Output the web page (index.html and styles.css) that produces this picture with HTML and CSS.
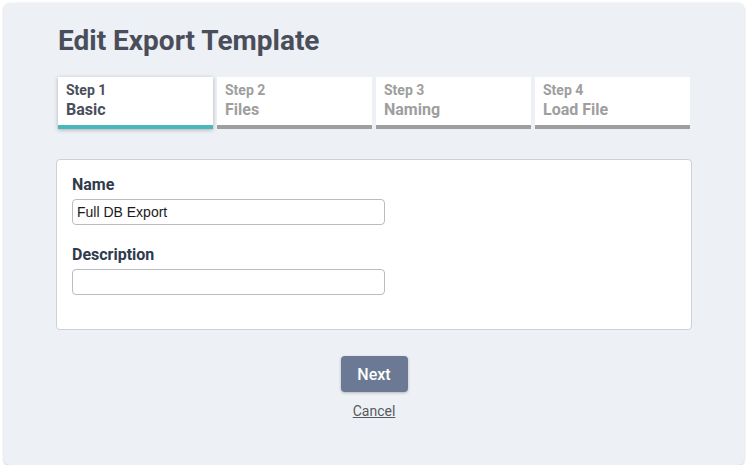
FILE: index.html
```html
<!DOCTYPE html>
<html lang="en">
<head>
<meta charset="utf-8">
<title>Edit Export Template</title>
<link rel="stylesheet" href="styles.css">
</head>
<body>
<div class="panel">
  <h1 class="title">Edit Export Template</h1>
  <div class="steps">
    <div class="step active">
      <div class="step-num">Step 1</div>
      <div class="step-name">Basic</div>
    </div>
    <div class="step">
      <div class="step-num">Step 2</div>
      <div class="step-name">Files</div>
    </div>
    <div class="step">
      <div class="step-num">Step 3</div>
      <div class="step-name">Naming</div>
    </div>
    <div class="step">
      <div class="step-num">Step 4</div>
      <div class="step-name">Load File</div>
    </div>
  </div>
  <div class="card">
    <div class="field">
      <label class="label" for="name">Name</label>
      <input class="input" id="name" type="text" value="Full DB Export">
    </div>
    <div class="field">
      <label class="label" for="desc">Description</label>
      <input class="input" id="desc" type="text" value="">
    </div>
  </div>
  <div class="actions">
    <button class="btn-next" type="button">Next</button>
    <a class="cancel" href="#">Cancel</a>
  </div>
</div>
</body>
</html>
```

FILE: styles.css
```css
* { box-sizing: border-box; }

html, body {
  margin: 0;
  padding: 0;
  background: #ffffff;
  font-family: Roboto, "Liberation Sans", Arial, sans-serif;
}

.panel {
  margin: 3px 5px 0 4px;
  height: 462px;
  background: #edf1f5;
  border-radius: 6px;
  box-shadow: 0 1px 3px rgba(0, 0, 0, 0.22);
  padding: 21px 52px 0 52px;
}

.title {
  margin: 0 0 19px 2px;
  font-size: 28px;
  line-height: 34px;
  font-weight: 700;
  color: #4a4e5a;
}

.steps {
  display: flex;
  gap: 4px;
  margin: 0 2px 30px 2px;
}

.step {
  flex: 1;
  background: #ffffff;
  padding: 4px 8px 5px 8px;
  border-bottom: 4px solid #9e9e9e;
  color: #9e9e9e;
  font-weight: 700;
}

.step.active {
  border-bottom-color: #4bb7bd;
  color: #4a4e5a;
  box-shadow: 0 1px 4px rgba(0, 0, 0, 0.28);
}

.step-num {
  font-size: 14px;
  line-height: 19px;
}

.step-name {
  font-size: 16px;
  line-height: 20px;
}

.card {
  background: #ffffff;
  border: 1px solid #cdd0d4;
  border-radius: 4px;
  padding: 16px 15px 13px 15px;
}

.field {
  display: flex;
  flex-direction: column;
  align-items: flex-start;
  margin-bottom: 21px;
}

.label {
  font-size: 16px;
  line-height: 18px;
  font-weight: 700;
  color: #2f3a4c;
  margin-bottom: 5px;
}

.input {
  width: 313px;
  height: 26px;
  border: 1px solid #b9bcc0;
  border-radius: 4px;
  padding: 0 4px;
  font-family: "Liberation Sans", Arial, sans-serif;
  font-size: 14px;
  color: #1a1a1a;
  background: #ffffff;
  outline: none;
}

.actions {
  display: flex;
  flex-direction: column;
  align-items: center;
  margin-top: 26px;
}

.btn-next {
  width: 67px;
  height: 36px;
  border: none;
  border-radius: 4px;
  background: #6b7994;
  color: #ffffff;
  font-family: Roboto, "Liberation Sans", Arial, sans-serif;
  font-size: 16px;
  font-weight: 500;
  box-shadow: 0 1px 3px rgba(0, 0, 0, 0.25);
  padding: 0;
}

.cancel {
  margin-top: 11px;
  font-size: 14px;
  line-height: 17px;
  color: #555a60;
  text-decoration: underline;
}
```
